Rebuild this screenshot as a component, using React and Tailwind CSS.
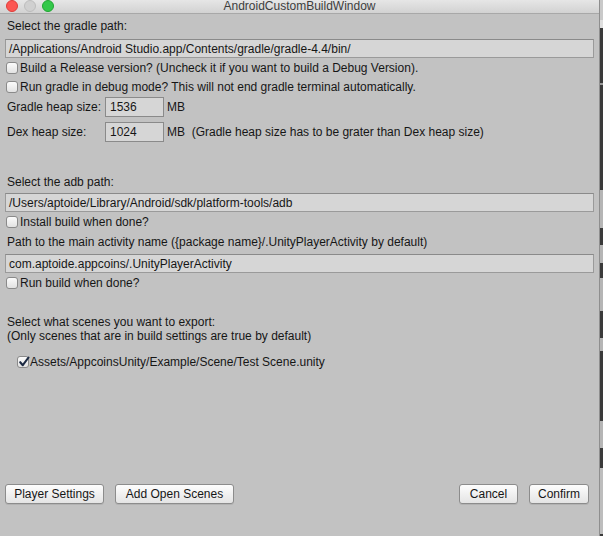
import React from "react";

function Checkbox({ checked = false }) {
  return (
    <div className="w-[12px] h-[12px] rounded-[3px] border border-[#8a8a8a] bg-gradient-to-b from-[#fbfbfb] to-[#e2e2e2] flex items-center justify-center shrink-0 relative">
      {checked && (
        <svg width="12" height="12" viewBox="0 0 12 12" className="absolute left-[0px] top-[-1px]">
          <path d="M2.2 6.2 L4.8 9.2 L10.5 1.5" stroke="#1d2b44" strokeWidth="2.1" fill="none" strokeLinecap="round" strokeLinejoin="round" />
        </svg>
      )}
    </div>
  );
}

function Field({ value, className = "" }) {
  return (
    <div className={"h-[19px] bg-[#d6d6d6] border border-[#9a9a9a] border-t-[#8a8a8a] flex items-center pl-[3px] whitespace-nowrap overflow-hidden " + className}>
      {value}
    </div>
  );
}

function Button({ children, className = "" }) {
  return (
    <div className={"h-[20px] rounded-[3px] border border-[#8c8c8c] bg-gradient-to-b from-[#fdfdfd] to-[#e4e4e4] flex items-center justify-center shadow-[0_1px_0_rgba(0,0,0,0.08)] " + className}>
      {children}
    </div>
  );
}

const segs = [
  ["h-[20px]", "bg-[#c9c9c9]"],
  ["h-[8px]", "bg-[#dedede]"],
  ["h-[55px]", "bg-[#3a3a3a]"],
  ["h-[2px]", "bg-[#9a9a9a]"],
  ["h-[105px]", "bg-[#3a3a3a]"],
  ["h-[38px]", "bg-[#b5b5b5]"],
  ["h-[17px]", "bg-[#3a3a3a]"],
  ["h-[18px]", "bg-[#b5b5b5]"],
  ["h-[15px]", "bg-[#3a3a3a]"],
  ["h-[33px]", "bg-[#b5b5b5]"],
  ["h-[27px]", "bg-[#3a3a3a]"],
  ["h-[13px]", "bg-[#b5b5b5]"],
  ["h-[70px]", "bg-[#3a3a3a]"],
  ["h-[27px]", "bg-[#b5b5b5]"],
  ["h-[20px]", "bg-[#3a3a3a]"],
  ["h-[66px]", "bg-[#bdbdbd]"],
];

export default function App() {
  return (
    <div className="w-[603px] h-[536px] flex overflow-hidden bg-[#3a3a3a] font-['Liberation_Sans',Arial,sans-serif] text-[12px] text-[#161616] leading-[14px]">
      <div className="w-[600px] h-full flex flex-col bg-[#c2c2c2] border-r border-[#8e8e8e]">
        {/* title bar */}
        <div className="h-[14px] shrink-0 border-b border-[#a8a8a8] bg-gradient-to-b from-[#e6e6e6] to-[#d2d2d2] relative flex items-center justify-center">
          <div className="absolute left-[6px] top-[0px] flex gap-[6px]">
            <div className="w-[12px] h-[12px] rounded-full bg-[#fc5753] border border-[#df3e3a]" />
            <div className="w-[12px] h-[12px] rounded-full bg-[#d0d0d0] border border-[#bdbdbd]" />
            <div className="w-[12px] h-[12px] rounded-full bg-[#34c84a] border border-[#20a532]" />
          </div>
          <span className="text-[12px] text-[#3d3d3d] leading-[12px] -mt-[2px]">AndroidCustomBuildWindow</span>
        </div>

        <div className="flex-1 flex flex-col px-[5px]">
          <div className="h-[20px] mt-[2px] flex items-center pl-[2px]">Select the gradle path:</div>
          <Field className="mt-[3px]" value="/Applications/Android Studio.app/Contents/gradle/gradle-4.4/bin/" />
          <div className="h-[19px] flex items-center gap-[2px] pl-[1px]">
            <Checkbox />
            <span>Build a Release version? (Uncheck it if you want to build a Debug Version).</span>
          </div>
          <div className="h-[20px] flex items-center gap-[2px] pl-[1px]">
            <Checkbox />
            <span>Run gradle in debug mode? This will not end gradle terminal automatically.</span>
          </div>
          <div className="h-[20px] flex items-center">
            <span className="w-[100px] pl-[2px]">Gradle heap size:</span>
            <div className="w-[59px] h-[20px] bg-[#d6d6d6] border border-[#8a8a8a] flex items-center pl-[4px]">1536</div>
            <span className="ml-[3px]">MB</span>
          </div>
          <div className="h-[20px] mt-[5px] flex items-center">
            <span className="w-[100px] pl-[2px]">Dex heap size:</span>
            <div className="w-[59px] h-[20px] bg-[#d6d6d6] border border-[#8a8a8a] flex items-center pl-[4px]">1024</div>
            <span className="ml-[3px]">MB&nbsp; (Gradle heap size has to be grater than Dex heap size)</span>
          </div>

          <div className="h-[20px] mt-[30px] flex items-center pl-[2px]">Select the adb path:</div>
          <Field className="mt-[1px]" value="/Users/aptoide/Library/Android/sdk/platform-tools/adb" />
          <div className="h-[20px] flex items-center gap-[2px] pl-[1px]">
            <Checkbox />
            <span>Install build when done?</span>
          </div>
          <div className="h-[20px] flex items-center pl-[2px]">Path to the main activity name ({"{"}package name{"}"}/.UnityPlayerActivity by default)</div>
          <Field className="mt-[2px]" value="com.aptoide.appcoins/.UnityPlayerActivity" />
          <div className="h-[19px] flex items-center gap-[2px] pl-[1px]">
            <Checkbox />
            <span>Run build when done?</span>
          </div>

          <div className="mt-[23px] pl-[2px]">
            <div className="h-[14px]">Select what scenes you want to export:</div>
            <div className="h-[14px]">(Only scenes that are in build settings are true by default)</div>
          </div>
          <div className="h-[20px] mt-[9px] flex items-center gap-[1px] pl-[12px]">
            <Checkbox checked />
            <span>Assets/AppcoinsUnity/Example/Scene/Test Scene.unity</span>
          </div>

          <div className="flex-1" />
          <div className="flex items-center pb-[32px]">
            <Button className="w-[99px]">Player Settings</Button>
            <Button className="w-[119px] ml-[11px]">Add Open Scenes</Button>
            <div className="flex-1" />
            <Button className="w-[59px]">Cancel</Button>
            <Button className="w-[60px] ml-[11px] mr-[5px]">Confirm</Button>
          </div>
        </div>
      </div>
      <div className="w-[3px] h-full flex flex-col">
        {segs.map(([h, c], i) => (
          <div key={i} className={h + " " + c + " shrink-0"} />
        ))}
      </div>
    </div>
  );
}
